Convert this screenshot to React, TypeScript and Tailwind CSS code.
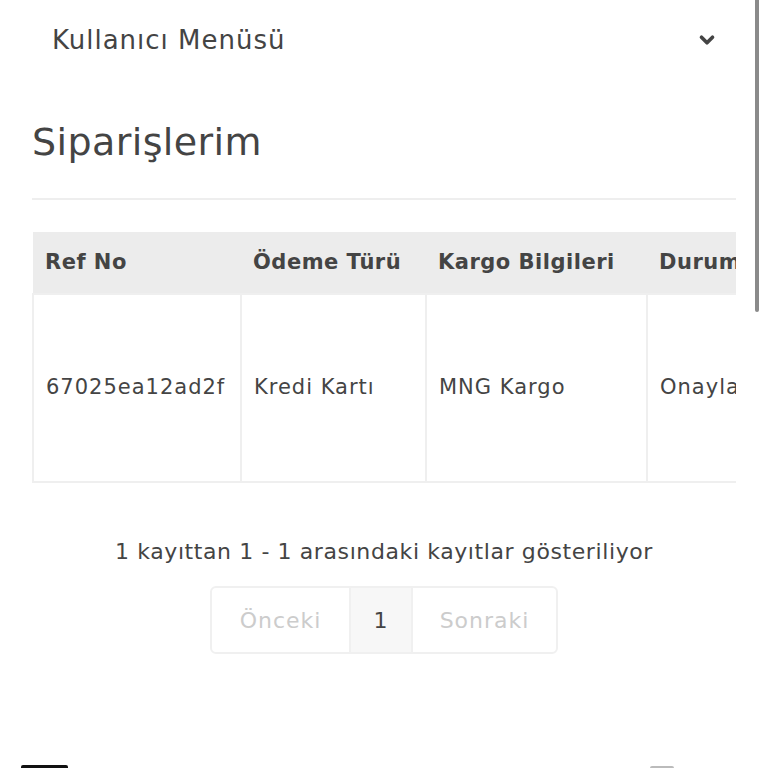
import { ChevronDown } from "lucide-react"

const font = { fontFamily: '"DejaVu Sans", "Noto Sans", sans-serif' }

export default function App() {
  return (
    <div className="relative h-[768px] w-[768px] overflow-hidden bg-white text-[#444]" style={font}>
      {/* scrollbar */}
      <div className="absolute right-[9px] top-0 h-[312px] w-[4px] rounded-b-full bg-[#8a8a8a]" />

      {/* user menu toggle */}
      <div className="flex h-[80px] items-center justify-between pl-[52px] pr-[50px]">
        <span className="text-[26px] tracking-[1px]">Kullanıcı Menüsü</span>
        <ChevronDown className="h-[22px] w-[22px]" strokeWidth={4} />
      </div>

      <div className="pl-[32px] pr-[32px]">
        <h1 className="mt-[38px] text-[38px] leading-[48px] tracking-[0.4px]">Siparişlerim</h1>
        <div className="mt-[32px] h-[2px] bg-[#eeeeee]" />

        {/* orders table */}
        <div className="mt-[32px] overflow-hidden">
          <table className="w-[820px] table-fixed border-collapse text-left">
            <thead>
              <tr className="h-[62px] bg-[#ececec] text-[21px] font-bold tracking-[0.5px]">
                <th className="w-[208px] pl-[12px]">Ref No</th>
                <th className="w-[185px] pl-[12px]">Ödeme Türü</th>
                <th className="w-[221px] pl-[12px]">Kargo Bilgileri</th>
                <th className="pl-[12px]">Durum</th>
              </tr>
            </thead>
            <tbody>
              <tr className="h-[188px] text-[21px] tracking-[1px]">
                <td className="border-2 border-[#efefef] pl-[12px]">67025ea12ad2f</td>
                <td className="border-2 border-[#efefef] pl-[12px]">Kredi Kartı</td>
                <td className="border-2 border-[#efefef] pl-[12px]">MNG Kargo</td>
                <td className="border-2 border-[#efefef] pl-[12px]">Onaylandı</td>
              </tr>
            </tbody>
          </table>
        </div>

        {/* info + pagination */}
        <p className="mt-[52px] text-center text-[22px] tracking-[0.6px]">
          1 kayıttan 1 - 1 arasındaki kayıtlar gösteriliyor
        </p>
        <div className="mt-[18px] flex justify-center">
          <div className="flex h-[68px] overflow-hidden rounded-[6px] border-2 border-[#f0f0f0] text-[22px] tracking-[1px]">
            <span className="flex w-[137px] items-center justify-center text-[#cccccc]">Önceki</span>
            <span className="flex w-[64px] items-center justify-center border-x-2 border-[#f0f0f0] bg-[#f7f7f7]">1</span>
            <span className="flex w-[143px] items-center justify-center text-[#cccccc]">Sonraki</span>
          </div>
        </div>
      </div>

      {/* cut-off elements at the bottom edge */}
      <div className="absolute bottom-0 left-[21px] h-[3px] w-[47px] rounded-t-[2px] bg-[#111]" />
      <div className="absolute bottom-0 left-[650px] h-[2px] w-[24px] rounded-t-full bg-[#bbb]" />
    </div>
  )
}
